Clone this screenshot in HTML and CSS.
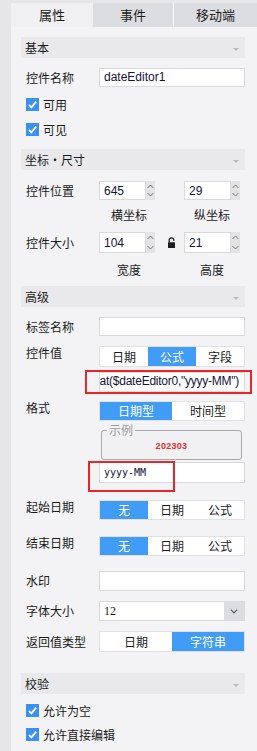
FILE: index.html
```html
<!DOCTYPE html>
<html lang="zh-CN">
<head>
  <meta charset="UTF-8">
  <title>属性面板</title>
  <link rel="stylesheet" href="styles.css">
</head>
<body>
<div class="main">
  <div class="tabs">
    <div class="tab tab-prop">属性</div>
    <div class="tab tab-event">事件</div>
    <div class="tab tab-mobile">移动端</div>
  </div>

  <div class="panel">
    <!-- 基本 -->
    <div class="sec sec-basic">基本<i class="caret"></i></div>
    <div class="row row-name">
      <span class="lbl">控件名称</span>
      <div class="field inp">dateEditor1</div>
    </div>
    <div class="check check-1"><i class="box"><svg viewBox="0 0 13 13"><path d="M3 6.8 L5.4 9.3 L10.2 3.6" /></svg></i>可用</div>
    <div class="check check-2"><i class="box"><svg viewBox="0 0 13 13"><path d="M3 6.8 L5.4 9.3 L10.2 3.6" /></svg></i>可见</div>

    <!-- 坐标・尺寸 -->
    <div class="sec sec-pos">坐标・尺寸<i class="caret"></i></div>
    <div class="row row-pos">
      <span class="lbl">控件位置</span>
      <div class="pair">
        <div class="spin"><div class="num">645</div><div class="arrows"><svg viewBox="0 0 9 19"><path d="M1.5 7 L4.5 4 L7.5 7 M1.5 12 L4.5 15 L7.5 12" /></svg></div></div>
        <div class="gap"></div>
        <div class="spin"><div class="num">29</div><div class="arrows"><svg viewBox="0 0 9 19"><path d="M1.5 7 L4.5 4 L7.5 7 M1.5 12 L4.5 15 L7.5 12" /></svg></div></div>
      </div>
    </div>
    <div class="row sub sub-pos"><span class="lbl"></span><div class="pair"><span class="cap">横坐标</span><div class="gap"></div><span class="cap">纵坐标</span></div></div>

    <div class="row row-size">
      <span class="lbl">控件大小</span>
      <div class="pair">
        <div class="spin tall"><div class="num">104</div><div class="arrows"><svg viewBox="0 0 9 21"><path d="M1.5 7 L4.5 4 L7.5 7 M1.5 14 L4.5 17 L7.5 14" /></svg></div></div>
        <div class="gap lock"><svg viewBox="0 0 9 11"><path class="shackle" d="M2.2 5.5 V3.2 A2.3 2.3 0 0 1 6.8 3.2 V3.8" /><rect x="1" y="5.2" width="7" height="5.8" rx="0.6" /></svg></div>
        <div class="spin tall"><div class="num">21</div><div class="arrows"><svg viewBox="0 0 9 21"><path d="M1.5 7 L4.5 4 L7.5 7 M1.5 14 L4.5 17 L7.5 14" /></svg></div></div>
      </div>
    </div>
    <div class="row sub sub-size"><span class="lbl"></span><div class="pair"><span class="cap">宽度</span><div class="gap"></div><span class="cap">高度</span></div></div>

    <!-- 高级 -->
    <div class="sec sec-adv">高级<i class="caret"></i></div>
    <div class="row row-tag">
      <span class="lbl">标签名称</span>
      <div class="field inp"></div>
    </div>
    <div class="row top row-value">
      <span class="lbl">控件值</span>
      <div class="field">
        <div class="seg seg-tall"><span>日期</span><span class="on">公式</span><span>字段</span></div>
        <div class="inp formula"><span>format($dateEditor0,"yyyy-MM")</span></div>
        <div class="mark mark-formula"></div>
      </div>
    </div>
    <div class="row top row-format">
      <span class="lbl">格式</span>
      <div class="field">
        <div class="seg"><span class="on">日期型</span><span>时间型</span></div>
        <div class="sample"><span class="legend">示例</span><span class="sample-val">202303</span></div>
        <div class="inp pattern">yyyy-MM</div>
        <div class="mark mark-pattern"></div>
      </div>
    </div>
    <div class="row top row-start">
      <span class="lbl">起始日期</span>
      <div class="field seg"><span class="on">无</span><span>日期</span><span>公式</span></div>
    </div>
    <div class="row top row-end">
      <span class="lbl">结束日期</span>
      <div class="field seg"><span class="on">无</span><span>日期</span><span>公式</span></div>
    </div>
    <div class="row row-water">
      <span class="lbl">水印</span>
      <div class="field inp tall-inp"></div>
    </div>
    <div class="row row-font">
      <span class="lbl">字体大小</span>
      <div class="field select">
        <span class="select-val">12</span>
        <span class="select-btn"><svg viewBox="0 0 20 20"><path d="M6.5 8.5 L10 12 L13.5 8.5" /></svg></span>
      </div>
    </div>
    <div class="row row-return">
      <span class="lbl">返回值类型</span>
      <div class="field seg seg-tall"><span>日期</span><span class="on">字符串</span></div>
    </div>

    <!-- 校验 -->
    <div class="sec sec-check">校验<i class="caret"></i></div>
    <div class="check check-3"><i class="box"><svg viewBox="0 0 13 13"><path d="M3 6.8 L5.4 9.3 L10.2 3.6" /></svg></i>允许为空</div>
    <div class="check check-4"><i class="box"><svg viewBox="0 0 13 13"><path d="M3 6.8 L5.4 9.3 L10.2 3.6" /></svg></i>允许直接编辑</div>
  </div>
</div>
</body>
</html>
```

FILE: styles.css
```css
* {
  box-sizing: border-box;
}

body {
  margin: 0;
  background-color: #e6e6e8;
  font-family: "Noto Sans CJK SC", "Liberation Sans", sans-serif;
  font-size: 12px;
  line-height: 14px;
  color: #1b1b1b;
}

.main {
  margin-left: 11px;
  padding-top: 3px;
}

/* abas */
.tabs {
  display: flex;
  height: 24px;
}

.tab {
  line-height: 24px;
  text-align: center;
  font-size: 13px;
  background-color: #dcdde0;
}

.tab-prop {
  width: 82px;
  background-color: #f0f0f2;
}

.tab-event {
  width: 81px;
  border-right: 1px solid #fafafa;
}

.tab-mobile {
  flex: 1;
}

.panel {
  background-color: #f3f3f5;
  padding: 10px 12px 10px 10px;
  min-height: calc(100vh - 27px);
}

/* cabeçalhos de seção */
.sec {
  height: 21px;
  line-height: 21px;
  background-color: #e9e9eb;
  padding: 0 6px 0 4px;
  display: flex;
  justify-content: space-between;
  align-items: center;
  font-size: 12px;
}

.caret {
  width: 0;
  height: 0;
  border-left: 3.5px solid transparent;
  border-right: 3.5px solid transparent;
  border-top: 3.5px solid #b9b9bb;
  margin-top: 3px;
}

.sec-pos { margin-top: 13px; }
.sec-adv { margin-top: 8px; }
.sec-check { margin-top: 21px; }

/* linhas */
.row {
  display: flex;
  align-items: center;
  padding-left: 5px;
}

.row.top {
  align-items: flex-start;
}

.lbl {
  width: 73px;
  flex: none;
  white-space: nowrap;
}

.field {
  width: 146px;
  position: relative;
}

.inp {
  height: 19px;
  background-color: #fff;
  border: 1px solid #dadadc;
  padding-left: 4px;
  line-height: 17px;
  font-family: "Liberation Sans", Arial, sans-serif;
  font-size: 12px;
  color: #14143a;
  white-space: nowrap;
  overflow: hidden;
}

.tall-inp { height: 20px; }

.row-name { margin-top: 10px; }
.row-pos { margin-top: 11px; }
.sub-pos { margin-top: 7px; }
.row-size { margin-top: 9px; }
.sub-size { margin-top: 9px; }
.row-tag { margin-top: 10px; }
.row-value { margin-top: 10px; }
.row-format { margin-top: 9px; }
.row-start { margin-top: 17px; }
.row-end { margin-top: 16px; }
.row-water { margin-top: 15px; }
.row-font { margin-top: 10px; }
.row-return { margin-top: 10px; }

/* checkboxes */
.check {
  display: flex;
  align-items: center;
  height: 13px;
  padding-left: 5px;
  line-height: 13px;
}

.check-1 { margin-top: 11px; }
.check-2 { margin-top: 12px; }
.check-3 { margin-top: 10px; }
.check-4 { margin-top: 11px; }

.box {
  width: 13px;
  height: 13px;
  background-color: #3b91f0;
  margin-right: 4px;
  display: block;
}

.box svg {
  display: block;
  width: 13px;
  height: 13px;
}

.box path {
  fill: none;
  stroke: #fff;
  stroke-width: 1.8;
}

/* coordenadas */
.pair {
  display: flex;
  width: 146px;
}

.spin {
  display: flex;
  width: 56px;
  height: 19px;
}

.spin.tall {
  height: 21px;
}

.num {
  flex: 1;
  background-color: #fff;
  border: 1px solid #dadadc;
  padding-left: 4px;
  display: flex;
  align-items: center;
  font-family: "Liberation Sans", Arial, sans-serif;
  font-size: 12px;
  color: #14143a;
}

.arrows {
  width: 9px;
  background-color: #e3e3e5;
}

.arrows svg {
  display: block;
  width: 9px;
  height: 100%;
}

.arrows path {
  fill: none;
  stroke: #77777a;
  stroke-width: 1;
}

.gap {
  width: 29px;
}

.lock {
  display: flex;
  justify-content: center;
  align-items: center;
  padding-left: 4px;
}

.lock svg {
  width: 9px;
  height: 11px;
}

.lock rect {
  fill: #1e1e1e;
}

.lock .shackle {
  fill: none;
  stroke: #1e1e1e;
  stroke-width: 1.3;
}

.sub {
  height: 16px;
  line-height: 16px;
}

.cap {
  width: 56px;
  text-align: center;
}

.sub-pos .cap:first-child,
.sub-size .cap:first-child {
  padding-left: 4px;
}

/* botões segmentados */
.seg {
  display: flex;
  height: 20px;
  background-color: #fff;
  border: 1px solid #e1e1e3;
}

.seg-tall {
  height: 21px;
}

.seg span {
  flex: 1;
  display: flex;
  align-items: center;
  justify-content: center;
}

.seg .on {
  background-color: #409cf5;
  color: #fff;
}

.formula {
  margin-top: 5px;
  height: 20px;
  display: flex;
  justify-content: flex-end;
  padding: 0 5px 0 0;
  letter-spacing: -0.25px;
}

.formula span {
  flex: none;
}

.sample {
  margin: 9px 3px 0 2px;
  height: 30px;
  border: 1px solid #a9a9ab;
  border-radius: 3px;
  background-color: #f1f1f3;
  position: relative;
  display: flex;
  justify-content: center;
  align-items: center;
  padding-top: 2px;
}

.legend {
  position: absolute;
  left: 5px;
  top: -8px;
  padding: 0 2px;
  background-color: #f3f3f5;
  color: #9a9a9c;
  line-height: 14px;
}

.sample-val {
  color: #ee2a2a;
  font-family: "Liberation Sans", Arial, sans-serif;
  font-size: 9px;
  font-weight: bold;
  letter-spacing: 0.3px;
}

.pattern {
  margin-top: 2px;
  height: 21px;
  line-height: 19px;
  font-family: "DejaVu Sans Mono", monospace;
  font-size: 10px;
}

/* marcações vermelhas */
.mark {
  position: absolute;
  border: 2px solid #e8262a;
  pointer-events: none;
}

.mark-formula {
  left: -14px;
  right: -7px;
  top: 24px;
  height: 24px;
}

.mark-pattern {
  left: -11px;
  width: 87px;
  top: 60px;
  height: 31px;
}

/* select */
.select {
  display: flex;
  height: 20px;
  background-color: #fff;
  border: 1px solid #dadadc;
}

.select-val {
  flex: 1;
  padding-left: 4px;
  line-height: 18px;
  font-family: "Liberation Serif", serif;
  font-size: 12px;
}

.select-btn {
  width: 20px;
  background-color: #dcdde0;
}

.select-btn svg {
  display: block;
  width: 20px;
  height: 18px;
}

.select-btn path {
  fill: none;
  stroke: #555;
  stroke-width: 1.3;
}
```
